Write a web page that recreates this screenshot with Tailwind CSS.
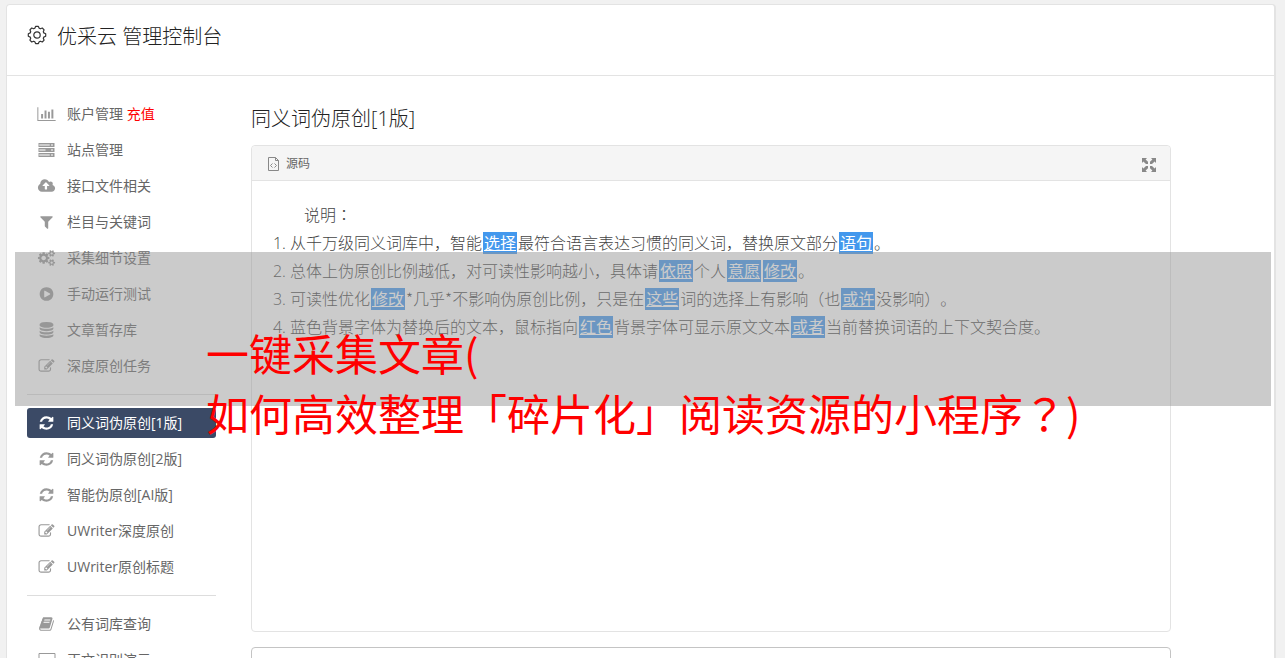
<!DOCTYPE html>
<html lang="zh-CN">
<head>
<meta charset="utf-8">
<meta name="viewport" content="width=device-width, initial-scale=1">
<title>优采云 管理控制台</title>
<script src="https://cdn.jsdelivr.net/npm/@tailwindcss/browser@4"></script>
</head>
<body class="relative h-screen overflow-hidden bg-[#f1f1f1] pl-1.5 pr-[9px] pt-1 font-['Open_Sans','Noto_Sans_CJK_SC',sans-serif] text-[#666] [text-spacing-trim:space-all]">
<svg class="hidden" aria-hidden="true">
  <symbol id="chart" viewBox="0 0 2048 1792"><path d="M640 896v512h-220v-512zm384-384v896h-220v-896zm1024 1060v110h-2048v-1536h110v1426zm-640-932v768h-220v-768zm384-256v1024h-220v-1024z"/></symbol>
  <symbol id="server" viewBox="0 0 18 16"><path fill-rule="evenodd" d="M1 1h16v4H1zM2 2v2h10V2zM14 2v2h1V2zM1 6h16v4H1zM2 7v2h6V7zM14 7v2h1V7zM1 11h16v4H1zM2 12v2h10v-2zM14 12v2h1v-2z"/><path opacity=".5" d="M2 2h10v2H2zM2 7h8v2H2zM2 12h10v2H2z"/></symbol>
  <symbol id="cloud" viewBox="0 0 1920 1792"><path d="M1280 864q0-14-9-23l-352-352q-9-9-23-9t-23 9l-351 351q-10 12-10 24 0 14 9 23t23 9h224v352q0 13 9.500 22.500t22.500 9.500h192q13 0 22.500-9.500t9.500-22.500v-352h224q13 0 22.500-9.500t9.500-22.500zm640 288q0 159-112.500 271.500t-271.500 112.500h-1088q-185 0-316.500-131.500t-131.500-316.500q0-130 70-240t188-165q-2-30-2-43 0-212 150-362t362-150q156 0 285.500 87t188.500 231q71-62 166-62 106 0 181 75t75 181q0 76-41 138 130 31 213.500 135.500t83.500 238.500z"/></symbol>
  <symbol id="filter" viewBox="0 0 1792 1792"><path d="M1595 295q17 41-14 70l-493 493v742q0 42-39 59-13 5-25 5-27 0-45-19l-256-256q-19-19-19-45v-486l-493-493q-31-29-14-70 17-39 59-39h1280q42 0 59 39z"/></symbol>
  <symbol id="cogs" viewBox="0 0 1920 1792"><path d="M896 896q0-106-75-181t-181-75-181 75-75 181 75 181 181 75 181-75 75-181zm768 512q0-52-38-90t-90-38-90 38-38 90q0 53 37.500 90.500t90.500 37.500 90.500-37.500 37.500-90.500zm0-1024q0-52-38-90t-90-38-90 38-38 90q0 53 37.500 90.500t90.500 37.500 90.500-37.500 37.500-90.500zm-384 421v185q0 10-7 19.500t-16 10.500l-155 24q-11 35-32 76 34 48 90 115 7 11 7 20 0 12-7 19-23 30-82.500 89.500t-78.500 59.500q-11 0-21-7l-115-90q-37 19-77 31-11 108-23 155-7 24-30 24h-186q-11 0-20-7.500t-10-17.500l-23-153q-34-10-75-31l-118 89q-7 7-20 7-11 0-21-8-144-133-144-160 0-9 7-19 10-14 41-53t47-61q-23-44-35-82l-152-24q-10-1-17-9.500t-7-19.500v-185q0-10 7-19.500t16-10.500l155-24q11-35 32-76-34-48-90-115-7-11-7-20 0-12 7-20 22-30 82-89t79-59q11 0 21 7l115 90q34-18 77-32 11-108 23-154 7-24 30-24h186q11 0 20 7.500t10 17.500l23 153q34 10 75 31l118-89q8-7 20-7 11 0 21 8 144 133 144 160 0 8-7 19-12 16-42 54t-45 60q23 48 34 82l152 23q10 2 17 10.500t7 19.500zm640 533v140q0 16-149 31-12 27-30 52 51 113 51 138 0 4-4 7-122 71-124 71-8 0-46-47t-52-68q-20 2-30 2t-30-2q-14 21-52 68t-46 47q-2 0-124-71-4-3-4-7 0-25 51-138-18-25-30-52-149-15-149-31v-140q0-16 149-31 13-29 30-52-51-113-51-138 0-4 4-7 4-2 35-20t59-34 30-16q8 0 46 46.500t52 67.500q20-2 30-2t30 2q51-71 92-112l6-2q4 0 124 70 4 3 4 7 0 25-51 138 17 23 30 52 149 15 149 31zm0-1024v140q0 16-149 31-12 27-30 52 51 113 51 138 0 4-4 7-122 71-124 71-8 0-46-47t-52-68q-20 2-30 2t-30-2q-14 21-52 68t-46 47q-2 0-124-71-4-3-4-7 0-25 51-138-18-25-30-52-149-15-149-31v-140q0-16 149-31 13-29 30-52-51-113-51-138 0-4 4-7 4-2 35-20t59-34 30-16q8 0 46 46.500t52 67.500q20-2 30-2t30 2q51-71 92-112l6-2q4 0 124 70 4 3 4 7 0 25-51 138 17 23 30 52 149 15 149 31z"/></symbol>
  <symbol id="play" viewBox="0 0 1792 1792"><path d="M896 128q209 0 385.500 103t279.500 279.500 103 385.500-103 385.500-279.500 279.500-385.500 103-385.500-103-279.500-279.500-103-385.500 103-385.500 279.500-279.500 385.500-103zm384 823q32-18 32-55t-32-55l-544-320q-31-19-64-1-32 19-32 56v640q0 37 32 56 16 8 32 8 17 0 32-9z"/></symbol>
  <symbol id="database" viewBox="0 0 1792 1792"><path d="M896 768q237 0 443-43t325-127v170q0 69-103 128t-280 93.500-385 34.500-385-34.500-280-93.500-103-128v-170q119 84 325 127t443 43zm0 768q237 0 443-43t325-127v170q0 69-103 128t-280 93.500-385 34.500-385-34.500-280-93.500-103-128v-170q119 84 325 127t443 43zm0-384q237 0 443-43t325-127v170q0 69-103 128t-280 93.500-385 34.500-385-34.500-280-93.500-103-128v-170q119 84 325 127t443 43zm0-1152q208 0 385 34.500t280 93.500 103 128v128q0 69-103 128t-280 93.500-385 34.500-385-34.500-280-93.500-103-128v-128q0-69 103-128t280-93.500 385-34.500z"/></symbol>
  <symbol id="edit" viewBox="0 0 1792 1792"><path d="M888 1184l116-116-152-152-116 116v56h96v96h56zm440-720q-16-16-33 1l-350 350q-17 17-1 33t33-1l350-350q17-17 1-33zm80 594v190q0 119-84.500 203.500t-203.500 84.500h-832q-119 0-203.500-84.500t-84.500-203.500v-832q0-119 84.500-203.500t203.500-84.500h832q63 0 117 25 15 7 18 23 3 17-9 29l-49 49q-14 14-32 8-23-6-45-6h-832q-66 0-113 47t-47 113v832q0 66 47 113t113 47h832q66 0 113-47t47-113v-126q0-13 9-22l64-64q15-15 35-7t20 29zm-96-738l288 288-672 672h-288v-288zm444 132l-92 92-288-288 92-92q28-28 68-28t68 28l152 152q28 28 28 68t-28 68z"/></symbol>
  <symbol id="refresh" viewBox="0 0 1792 1792"><path d="M1639 1056q0 5-1 7-64 268-268 434.500t-478 166.500q-146 0-282.500-55t-243.500-157l-129 129q-19 19-45 19t-45-19-19-45v-448q0-26 19-45t45-19h448q26 0 45 19t19 45-19 45l-137 137q71 66 161 102t187 36q134 0 250-65t186-179q11-17 53-117 8-23 30-23h192q13 0 22.500 9.500t9.500 22.500zm25-800v448q0 26-19 45t-45 19h-448q-26 0-45-19t-19-45 19-45l138-138q-148-137-349-137-134 0-250 65t-186 179q-11 17-53 117-8 23-30 23h-199q-13 0-22.500-9.500t-9.500-22.500v-7q65-268 270-434.500t480-166.500q146 0 284 55.500t245 156.500l130-129q19-19 45-19t45 19 19 45z"/></symbol>
  <symbol id="book" viewBox="0 0 1792 1792"><path d="M1703 478q40 57 18 129l-275 906q-19 64-76.500 107.500t-122.500 43.500h-923q-77 0-148.500-53.500t-99.500-131.500q-24-67-2-127 0-4 3-27t4-37q1-8-3-21.500t-3-19.500q2-11 8-21t16.500-23.500 16.500-23.500q23-38 45-91.500t30-91.500q3-10 .5-30t-.5-28q3-11 17-28t17-23q21-36 42-92t25-90q1-9-2.500-32t.5-28q4-13 22-30.500t22-22.500q19-26 42.500-84.500t27.500-96.500q1-8-3-25.500t-2-26.500q2-8 9-18t18-23 17-21q8-12 16.500-30.500t15-35 16-36 19.500-32 26.500-23.500 36-11.500 47.500 5.500l-1 3q38-9 51-9h761q74 0 114 56t18 130l-274 906q-36 119-71.500 153.500t-128.500 34.500h-869q-27 0-38 15-11 16-1 43 24 70 144 70h923q29 0 56-15.500t35-41.500l300-987q7-22 5-57 38 15 59 43zm-1064 2q-4 13 2 22.500t20 9.500h608q13 0 25.500-9.500t16.500-22.500l21-64q4-13-2-22.500t-20-9.500h-608q-13 0-25.500 9.500t-16.500 22.500zm-83 256q-4 13 2 22.500t20 9.500h608q13 0 25.500-9.500t16.500-22.500l21-64q4-13-2-22.500t-20-9.500h-608q-13 0-25.500 9.500t-16.500 22.500z"/></symbol>
  <symbol id="laptop" viewBox="0 0 18 16"><path d="M1.500 1.500h16v11h-16z" fill="none" stroke="currentColor"/><path d="M0 13h18v2H0z"/></symbol>
</svg>

<div class="min-h-full rounded-t border border-r-2 border-[#e3e3e3] bg-white">
  <header class="flex h-[71px] items-start gap-2.5 border-b border-[#e3e3e3] pl-5 pt-[17px] text-[#222]">
    <svg class="mt-[3px] size-5" viewBox="0 0 20 20" fill="none" stroke="#333" stroke-width="1.200" stroke-linejoin="round" aria-hidden="true"><path d="M8.600 1.400h2.800l.8 1.900 1.100.5 2-.8 1.800 1.800-.8 2 .5 1.100 1.900.8v2.600l-1.900.8-.5 1.100.8 2-1.800 1.800-2-.8-1.100.5-.8 1.900H8.600l-.8-1.900-1.100-.5-2 .8-1.800-1.800.8-2-.5-1.100-1.900-.8V8.700l1.900-.8.500-1.100-.8-2L4.700 3l2 .8 1.100-.5z"/><circle cx="10" cy="10" r="3.200"/></svg>
    <h1 class="text-xl font-light leading-[30px]">优采云 管理控制台</h1>
  </header>

  <div class="flex gap-[35px] pl-5 pr-[103px] pt-[23px]">
    <nav class="w-[189px] shrink-0 text-sm" aria-label="主菜单">
      <ul class="flex flex-col gap-1.5">
        <li class="flex h-[30px] items-center gap-[11px] pl-2.5"><svg class="h-4 w-[19px] fill-[#999]"><use href="#chart"/></svg><span><a href="#">账户管理</a> <a href="#" class="text-[#f00]">充值</a></span></li>
        <li><a href="#" class="flex h-[30px] items-center gap-[11px] pl-2.5"><svg class="h-4 w-[19px] fill-[#999]"><use href="#server"/></svg>站点管理</a></li>
        <li><a href="#" class="flex h-[30px] items-center gap-[11px] pl-2.5"><svg class="h-4 w-[19px] fill-[#999]"><use href="#cloud"/></svg>接口文件相关</a></li>
        <li><a href="#" class="flex h-[30px] items-center gap-[11px] pl-2.5"><svg class="h-4 w-[19px] fill-[#999]"><use href="#filter"/></svg>栏目与关键词</a></li>
        <li><a href="#" class="flex h-[30px] items-center gap-[11px] pl-2.5"><svg class="h-4 w-[19px] fill-[#999]"><use href="#cogs"/></svg>采集细节设置</a></li>
        <li><a href="#" class="flex h-[30px] items-center gap-[11px] pl-2.5"><svg class="h-4 w-[19px] fill-[#999]"><use href="#play"/></svg>手动运行测试</a></li>
        <li><a href="#" class="flex h-[30px] items-center gap-[11px] pl-2.5"><svg class="h-4 w-[19px] fill-[#999]"><use href="#database"/></svg>文章暂存库</a></li>
        <li><a href="#" class="flex h-[30px] items-center gap-[11px] pl-2.5"><svg class="h-4 w-[19px] fill-[#999]"><use href="#edit"/></svg>深度原创任务</a></li>
      </ul>
      <hr class="my-[13px] border-[#ddd]">
      <ul class="flex flex-col gap-1.5">
        <li><a href="#" aria-current="page" class="flex h-[30px] items-center gap-[11px] rounded-[3px] bg-[#3b4a66] pl-2.5 text-white"><svg class="h-4 w-[19px] fill-white"><use href="#refresh"/></svg>同义词伪原创[1版]</a></li>
        <li><a href="#" class="flex h-[30px] items-center gap-[11px] pl-2.5"><svg class="h-4 w-[19px] fill-[#999]"><use href="#refresh"/></svg>同义词伪原创[2版]</a></li>
        <li><a href="#" class="flex h-[30px] items-center gap-[11px] pl-2.5"><svg class="h-4 w-[19px] fill-[#999]"><use href="#refresh"/></svg>智能伪原创[AI版]</a></li>
        <li><a href="#" class="flex h-[30px] items-center gap-[11px] pl-2.5"><svg class="h-4 w-[19px] fill-[#999]"><use href="#edit"/></svg>UWriter深度原创</a></li>
        <li><a href="#" class="flex h-[30px] items-center gap-[11px] pl-2.5"><svg class="h-4 w-[19px] fill-[#999]"><use href="#edit"/></svg>UWriter原创标题</a></li>
      </ul>
      <hr class="my-[13px] border-[#ddd]">
      <ul class="flex flex-col gap-1.5">
        <li><a href="#" class="flex h-[30px] items-center gap-[11px] pl-2.5"><svg class="h-4 w-[19px] fill-[#999]"><use href="#book"/></svg>公有词库查询</a></li>
        <li><a href="#" class="flex h-[30px] items-center gap-[11px] pl-2.5"><svg class="h-4 w-[19px] fill-[#999] text-[#999]"><use href="#laptop"/></svg>正文识别演示</a></li>
      </ul>
    </nav>

    <main class="min-w-0 flex-1 pt-1">
      <h2 class="text-xl font-light leading-8 text-[#222]">同义词伪原创[1版]</h2>
      <section class="mt-2.5 min-h-[487px] rounded border border-[#e3e3e3]">
        <div class="flex h-[35px] items-center justify-between rounded-t border-b border-[#e3e3e3] bg-[#f5f5f5] pl-4 pr-3.5">
          <button type="button" class="flex items-center gap-[7px] pt-0.5 text-xs">
            <svg class="h-3.5 w-[11px]" viewBox="0 0 11 14" fill="none" stroke="#888" aria-hidden="true"><path d="M.5.5h7l3 3v10H.5zM7.500.5v3h3M4.500 6.500L2.500 8.500l2 2M6.500 6.500l2 2-2 2"/></svg>源码
          </button>
          <button type="button" aria-label="全屏" class="mt-1">
            <svg class="size-3.5" viewBox="0 0 14 14" fill="#888"><path d="M0 0h5L3.600 1.400 6 3.800V6H4L1.400 3.600 0 5zM14 0H9l1.400 1.400L8 3.800V6h2l2.600-2.400L14 5zM0 14h5l-1.400-1.400L6 10.200V8H4l-2.600 2.400L0 9zM14 14H9l1.400-1.400L8 10.200V8h2l2.600 2.400L14 9z"/></svg>
          </button>
        </div>
        <div class="px-5 pt-5 text-base font-light leading-7 text-[#444]">
          <p class="indent-8">说明<span class="font-['Noto_Sans_CJK_TC',sans-serif] leading-none" lang="zh-TW">：</span></p>
          <ol class="list-decimal pl-[18px]">
            <li>从千万级同义词库中，智能<a href="#" class="mx-px bg-[#4398ed] px-px font-normal text-white underline">选择</a>最符合语言表达习惯的同义词，替换原文部分<a href="#" class="mx-px bg-[#4398ed] px-px font-normal text-white underline">语句</a>。</li>
            <li>总体上伪原创比例越低，对可读性影响越小，具体请<a href="#" class="mx-px bg-[#4398ed] px-px font-normal text-white underline">依照</a>个人<a href="#" class="mx-px bg-[#4398ed] px-px font-normal text-white underline">意愿</a><a href="#" class="mx-px bg-[#4398ed] px-px font-normal text-white underline">修改</a>。</li>
            <li>可读性优化<a href="#" class="mx-px bg-[#4398ed] px-px font-normal text-white underline">修改</a><span class="font-['Noto_Sans_CJK_SC',sans-serif] leading-none">*几乎*</span>不影响伪原创比例，只是在<a href="#" class="mx-px bg-[#4398ed] px-px font-normal text-white underline">这些</a>词的选择上有影响（也<a href="#" class="mx-px bg-[#4398ed] px-px font-normal text-white underline">或许</a>没影响）。</li>
            <li>蓝色背景字体为替换后的文本，鼠标指向<a href="#" class="mx-px bg-[#4398ed] px-px font-normal text-white underline">红色</a>背景字体可显示原文文本<a href="#" class="mx-px bg-[#4398ed] px-px font-normal text-white underline">或者</a>当前替换词语的上下文契合度。</li>
          </ol>
        </div>
      </section>
      <textarea aria-label="原文" class="mt-[15px] block h-40 w-full resize-none rounded border border-[#c4c4c4] bg-white"></textarea>
    </main>
  </div>
</div>

<div class="pointer-events-none absolute left-[15px] right-3.5 top-[252px] h-[154px] bg-[#959595]/49"></div>
<p class="absolute left-[206px] top-[322px] whitespace-nowrap font-['Noto_Sans_CJK_SC',sans-serif] text-[43px] leading-[60px] text-[#f00]">一键采集文章(<br>如何高效整理「碎片化」阅读资源的小程序<span class="font-['Noto_Sans_CJK_TC',sans-serif]" lang="zh-TW">？</span>)</p>
</body>
</html>
